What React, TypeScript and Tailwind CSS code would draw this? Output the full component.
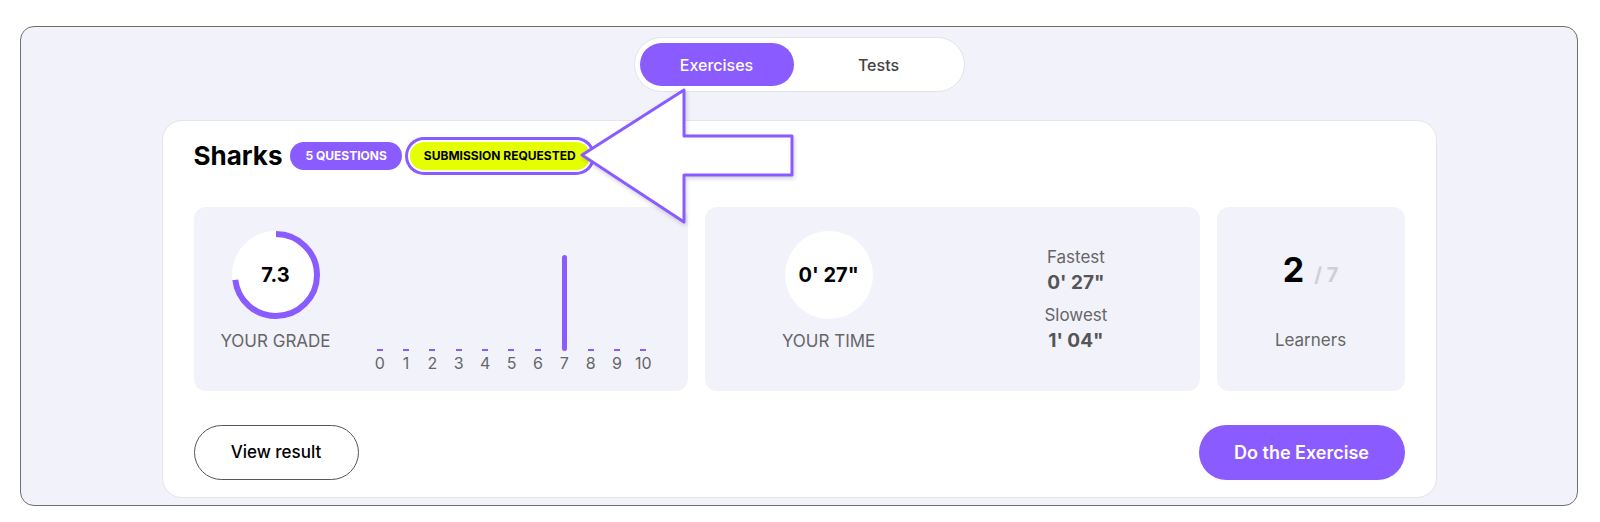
import React from 'react';

const PURPLE = '#8a5bff';

function GradeRing({ value }: { value: number }) {
  const r = 41;
  const c = 2 * Math.PI * r;
  const len = (value / 10) * c;
  return (
    <svg width="88" height="88" viewBox="0 0 88 88" className="block">
      <circle cx="44" cy="44" r="44" fill="#ffffff" />
      <circle
        cx="44"
        cy="44"
        r={r}
        fill="none"
        stroke={PURPLE}
        strokeWidth="6"
        strokeDasharray={`${len} ${c}`}
        transform="rotate(-90 44 44)"
      />
    </svg>
  );
}

function CircleStat({ label, children }: { label: string; children: React.ReactNode }) {
  return (
    <div className="flex w-[110px] flex-col items-center">
      <div className="relative flex h-[88px] w-[88px] items-center justify-center rounded-full bg-white">
        {children}
      </div>
      <div className="mt-[12px] whitespace-nowrap text-[17px] leading-5 text-[#666666]">{label}</div>
    </div>
  );
}

function GradeChart() {
  const ticks = [0, 1, 2, 3, 4, 5, 6, 7, 8, 9, 10];
  return (
    <div className="grid w-[290px] grid-cols-11">
      {ticks.map((t) => (
        <div key={t} className="flex flex-col items-center">
          <div className="flex h-[96px] items-end">
            {t === 7 ? (
              <div className="h-[96px] w-[5px] rounded-full bg-[#8a5bff]" />
            ) : (
              <div className="h-[2px] w-[6px] bg-[#8a5bff]" />
            )}
          </div>
          <div className="mt-[2px] text-[16px] leading-5 text-[#666666]">{t}</div>
        </div>
      ))}
    </div>
  );
}

export default function App() {
  return (
    <div
      className="relative h-[522px] w-[1600px] bg-white pt-[26px]"
      style={{ fontFamily: 'Inter, "Noto Sans", sans-serif' }}
    >
      <div className="ml-[20px] flex h-[480px] w-[1558px] flex-col items-center rounded-[14px] border border-[#6e6e6e] bg-[#f2f2fa] pt-[10px]">
        {/* tabs */}
        <div className="flex h-[55px] items-center rounded-full border border-[#e2e2e8] bg-white px-[5px]">
          <button className="h-[43px] w-[154px] rounded-full bg-[#8a5bff] text-[16px] font-medium text-white">
            Exercises
          </button>
          <button className="ml-[5px] h-[43px] w-[160px] rounded-full text-[16px] font-medium text-[#444444]">
            Tests
          </button>
        </div>

        {/* card */}
        <div className="mt-[28px] w-[1275px] rounded-[20px] border border-[#e4e4ea] bg-white px-[31px] pb-[17px] pt-[21px]">
          <div className="flex h-[28px] items-center gap-2">
            <h2 className="text-[26px] font-bold leading-none text-black">Sharks</h2>
            <span className="flex h-[28px] items-center rounded-full bg-[#8a5bff] px-[15px] text-[12px] font-bold text-white">
              5 QUESTIONS
            </span>
            <span className="flex h-[28px] items-center rounded-full bg-[#e6ff00] px-[14px] text-[12px] font-bold text-black shadow-[0_0_0_2px_#ffffff,0_0_0_5px_#8a5bff]">
              SUBMISSION REQUESTED
            </span>
          </div>

          <div className="mt-[37px] grid h-[184px] grid-cols-[1fr_1fr_188px] gap-[17px]">
            {/* grade */}
            <div className="flex rounded-[12px] bg-[#f2f2fa] pl-[27px] pt-[24px]">
              <CircleStat label="YOUR GRADE">
                <div className="absolute inset-0">
                  <GradeRing value={7.3} />
                </div>
                <span className="relative text-[20px] font-bold text-black">7.3</span>
              </CircleStat>
              <div className="ml-[36px] mt-[24px]">
                <GradeChart />
              </div>
            </div>

            {/* time */}
            <div className="grid grid-cols-2 rounded-[12px] bg-[#f2f2fa]">
              <div className="flex justify-center pt-[24px]">
                <CircleStat label="YOUR TIME">
                  <span className="text-[20px] font-bold text-black">0' 27"</span>
                </CircleStat>
              </div>
              <div className="flex flex-col items-center pt-[37px]">
                <div className="text-[17px] leading-[26px] text-[#666666]">Fastest</div>
                <div className="text-[19px] font-bold leading-[26px] text-[#555555]">0' 27"</div>
                <div className="mt-[6px] text-[17px] leading-[26px] text-[#666666]">Slowest</div>
                <div className="text-[19px] font-bold leading-[26px] text-[#555555]">1' 04"</div>
              </div>
            </div>

            {/* learners */}
            <div className="flex flex-col items-center rounded-[12px] bg-[#f2f2fa] pt-[43px]">
              <div className="flex items-baseline gap-[10px] leading-[40px]">
                <span className="text-[34px] font-bold text-black">2</span>
                <span className="text-[20px] font-bold text-[#cfcfd4]">/ 7</span>
              </div>
              <div className="mt-[33px] text-[17px] leading-6 text-[#666666]">Learners</div>
            </div>
          </div>

          <div className="mt-[34px] flex items-center justify-between">
            <button className="h-[55px] w-[165px] rounded-full border border-[#555555] bg-white text-[17px] font-medium text-black">
              View result
            </button>
            <button className="h-[55px] w-[206px] rounded-full bg-[#8a5bff] text-[18px] font-semibold text-white">
              Do the Exercise
            </button>
          </div>
        </div>
      </div>

      {/* callout arrow */}
      <svg
        className="pointer-events-none absolute left-0 top-0"
        width="1600"
        height="522"
        viewBox="0 0 1600 522"
      >
        <defs>
          <filter id="arrowShadow" x="-20%" y="-20%" width="140%" height="140%">
            <feDropShadow dx="1" dy="2" stdDeviation="2" floodColor="#000000" floodOpacity="0.18" />
          </filter>
        </defs>
        <polygon
          points="582,155 684,90 684,136 792,136 792,175 684,175 684,222"
          fill="#ffffff"
          stroke={PURPLE}
          strokeWidth="3"
          strokeLinejoin="round"
          filter="url(#arrowShadow)"
        />
      </svg>
    </div>
  );
}
